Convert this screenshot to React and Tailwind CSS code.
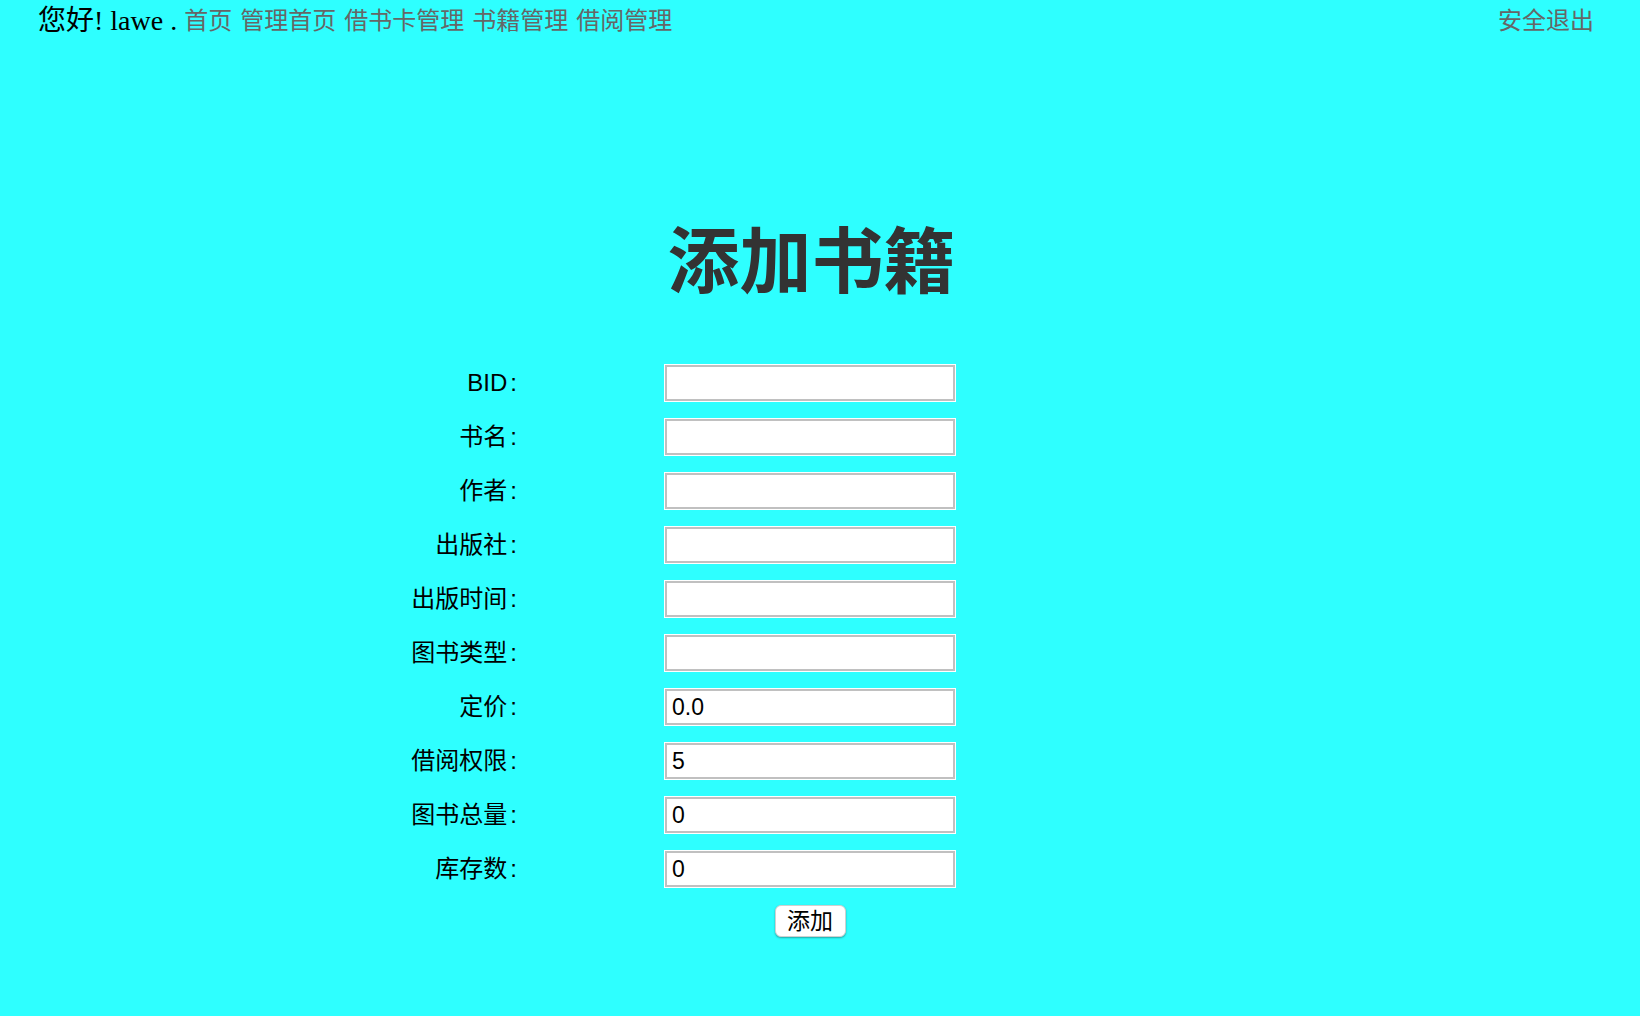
import React from "react";

const rows = [
  ["BID", ""],
  ["书名", ""],
  ["作者", ""],
  ["出版社", ""],
  ["出版时间", ""],
  ["图书类型", ""],
  ["定价", "0.0"],
  ["借阅权限", "5"],
  ["图书总量", "0"],
  ["库存数", "0"],
];

const sans = "font-['Liberation_Sans','Noto_Sans_CJK_SC',sans-serif]";

export default function App() {
  return (
    <div className="min-h-[1016px] w-full bg-[#2effff] text-black">
      <div className="flex items-center justify-between pl-[38px] pr-[46px] pt-[4px] h-[38px]">
        <div className="flex items-center leading-none">
          <span className="font-['Liberation_Serif','Noto_Sans_CJK_SC',serif] text-[28px] text-black">
            您好! lawe .
          </span>
          <nav className={`flex items-center gap-[8px] ml-[7px] text-[#666666] ${sans} text-[24px]`}>
            <a>首页</a>
            <a>管理首页</a>
            <a>借书卡管理</a>
            <a>书籍管理</a>
            <a>借阅管理</a>
          </nav>
        </div>
        <a className={`text-[#666666] ${sans} text-[24px] leading-none`}>安全退出</a>
      </div>

      <div className="w-[1620px]">
        <h1 className="mt-[182px] text-center text-[72px] leading-none font-bold text-[#333333] font-['Noto_Sans_CJK_SC',serif] pl-[3px]">
          添加书籍
        </h1>

        <div className={`mt-[73px] grid grid-cols-[1fr_290px_1fr] gap-y-[18px] ${sans}`}>
          {rows.map(([label, value]) => (
            <React.Fragment key={label}>
              <label className="flex items-center justify-end pr-[148px] text-[24px] leading-none">
                {label}
                <span className="ml-[3px]">:</span>
              </label>
              <input
                defaultValue={value}
                className="h-[36px] w-[290px] bg-white border-2 border-[#c0c0c0] shadow-[0_0_0_1px_#ffffff] px-[5px] text-[23px] text-black outline-none"
              />
              <div />
            </React.Fragment>
          ))}
          <div />
          <div className="flex justify-center">
            <button className="h-[32px] w-[71px] rounded-[6px] bg-white border border-[#d0d0d0] shadow-[0_1px_2px_rgba(0,0,0,0.35)] text-[23px] leading-none text-black">
              添加
            </button>
          </div>
          <div />
        </div>
      </div>
    </div>
  );
}
